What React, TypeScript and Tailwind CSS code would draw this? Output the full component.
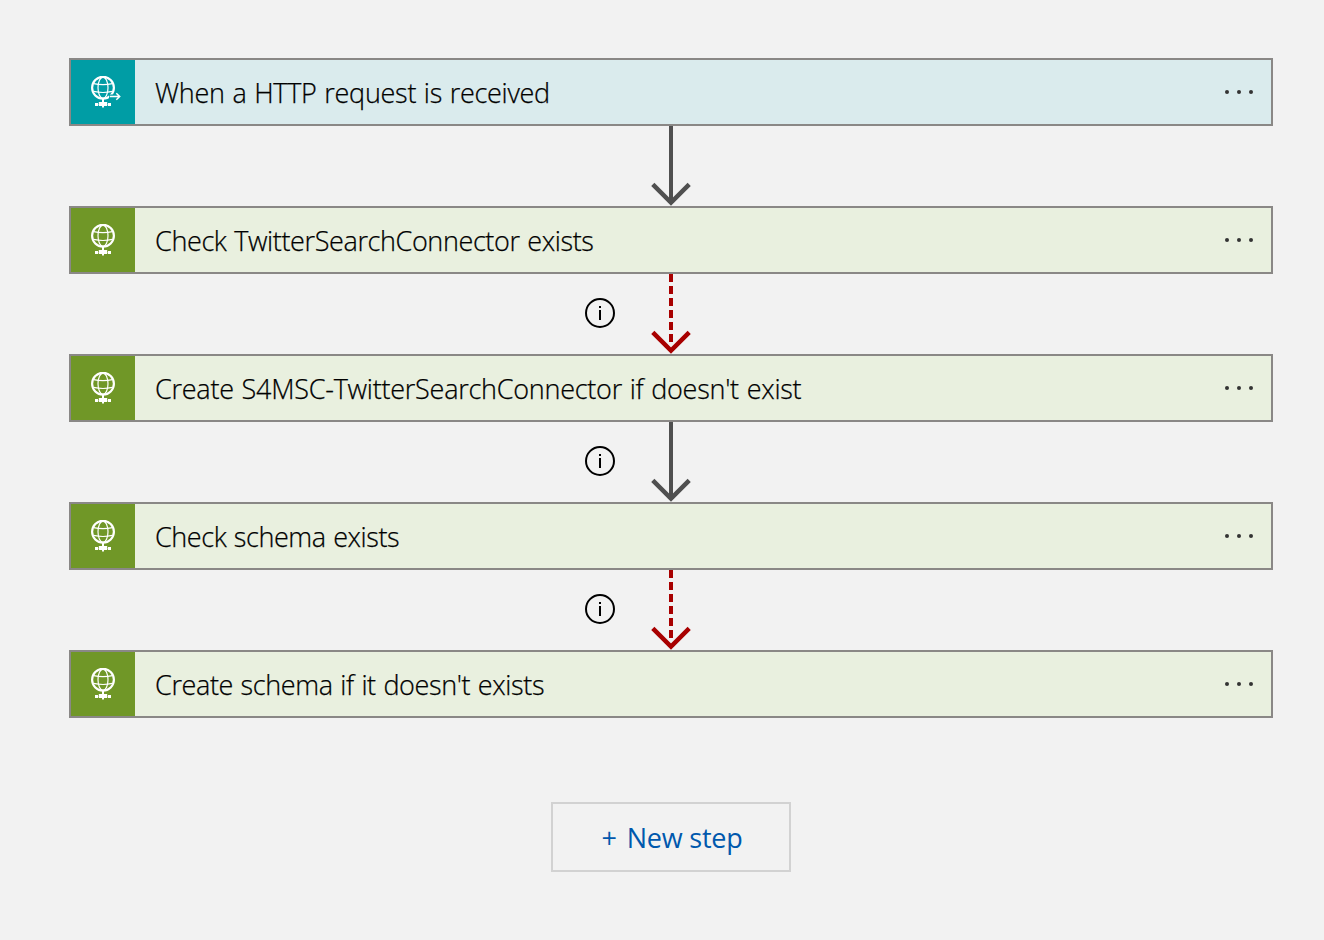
type Step = {
  title: string;
  tracking: string;
  trigger?: boolean;
};

type Link = "success" | "failure";

const steps: Step[] = [
  { title: "When a HTTP request is received", tracking: "tracking-[-0.28px]", trigger: true },
  { title: "Check TwitterSearchConnector exists", tracking: "tracking-[-0.38px]" },
  { title: "Create S4MSC-TwitterSearchConnector if doesn't exist", tracking: "tracking-[-0.25px]" },
  { title: "Check schema exists", tracking: "tracking-[-0.43px]" },
  { title: "Create schema if it doesn't exists", tracking: "tracking-[-0.38px]" },
];

const links: { kind: Link; info: boolean }[] = [
  { kind: "success", info: false },
  { kind: "failure", info: true },
  { kind: "success", info: true },
  { kind: "failure", info: true },
];

function GlobeIcon({ arrow }: { arrow?: boolean }) {
  return (
    <svg viewBox="0 0 36 32" className="ml-4 h-8 w-9 shrink-0" fill="none" stroke="#fff">
      <circle cx="16" cy="11.7" r="10.9" strokeWidth="2.2" />
      <ellipse cx="16" cy="11.7" rx="5" ry="10.6" strokeWidth="1.2" />
      <path d="M6.5 7.6Q16 9.6 25.5 7.6M6.5 15.4Q16 17.6 25.5 15.4" strokeWidth="1.1" />
      <g fill="#fff" stroke="none">
        <path d="M15 23h2v3h-2z" />
        <path d="M11.8 26h8.4v4h-8.4z" />
        <path d="M8 27h3v3H8zM21 27h3v3h-3z" />
        <path d="M15 30h2v1.6h-2z" />
        <path d="M11 28h10v1H11z" opacity="0.3" />
      </g>
      {arrow && (
        <g>
          <path d="M22 20.5H33" stroke="#009da5" strokeWidth="4" />
          <path d="M22.7 20.5H32.5M29.3 17.2l3.4 3.3l-3.4 3.3" strokeWidth="1.5" />
        </g>
      )}
    </svg>
  );
}

function StepCard({ step }: { step: Step }) {
  return (
    <div
      className={`flex h-[68px] w-full items-center border-2 border-[#8a8886] ${
        step.trigger ? "bg-[#daebed]" : "bg-[#e9f0df]"
      }`}
    >
      <div className={`flex h-16 w-16 shrink-0 items-center ${step.trigger ? "bg-[#009da5]" : "bg-[#709727]"}`}>
        <GlobeIcon arrow={step.trigger} />
      </div>
      <span
        className={`ml-5 flex-1 pt-0.5 text-[27px] leading-9 font-light whitespace-nowrap text-black [word-spacing:1px] [-webkit-text-stroke:0.25px_black] ${step.tracking}`}
      >
        {step.title}
      </span>
      <button aria-label="More" className="mr-4 flex h-8 w-8 items-center justify-center gap-2">
        <i className="size-1 rounded-full bg-[#333]" />
        <i className="size-1 rounded-full bg-[#333]" />
        <i className="size-1 rounded-full bg-[#333]" />
      </button>
    </div>
  );
}

function InfoIcon() {
  return (
    <svg viewBox="0 0 30 30" className="h-[30px] w-[30px]" fill="none" stroke="#000">
      <circle cx="15" cy="15" r="14" strokeWidth="2" />
      <path d="M15 12v10M15 8v2" strokeWidth="2" />
    </svg>
  );
}

function Connector({ kind, info }: { kind: Link; info: boolean }) {
  const failed = kind === "failure";
  const color = failed ? "#a80000" : "#505050";
  return (
    <div className="grid h-20 grid-cols-[1fr_40px_1fr] items-center">
      <div className="flex justify-end pr-9 pb-0.5">{info && <InfoIcon />}</div>
      <svg viewBox="0 0 40 80" className="h-20 w-10" fill="none" stroke={color} strokeWidth="4">
        <path d={failed ? "M20 0V70" : "M20 0V76"} strokeDasharray={failed ? "8 4" : undefined} />
        <path d="M1.8 58.4L20 76.6L38.2 58.4" strokeWidth="4.5" />
      </svg>
      <div />
    </div>
  );
}

export default function App() {
  return (
    <main className="flex min-h-screen flex-col items-center bg-[#f2f2f2] pt-[58px] pl-[18px] font-['Open_Sans','Noto_Sans',sans-serif]">
      <div className="w-[1204px]">
        {steps.map((step, i) => (
          <div key={step.title}>
            <StepCard step={step} />
            {links[i] && <Connector {...links[i]} />}
          </div>
        ))}
      </div>
      <button className="mt-[84px] flex h-[70px] w-60 items-center justify-center gap-[10px] border-2 border-[#d2d2d2] pt-[3px] pl-0.5 text-[27px] tracking-[-0.2px] whitespace-nowrap text-[#0058ad]">
        <span>+</span>
        <span>New step</span>
      </button>
    </main>
  );
}
